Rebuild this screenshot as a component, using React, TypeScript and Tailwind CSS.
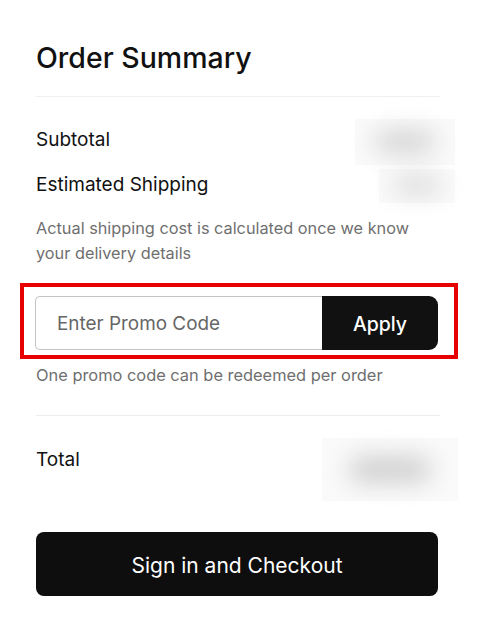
import { useState } from "react";

function Blur({ w, h }: { w: string; h: string }) {
  // blurred price placeholder
  return (
    <div className={`flex items-center justify-center shrink-0 ${w} ${h} bg-[#fafafa]`}>
      <div className="w-3/5 h-2/5 rounded-full bg-[#cdcdcd] blur-md" />
    </div>
  );
}

export default function App() {
  const [code, setCode] = useState("");

  return (
    <div className="w-[478px] h-[617px] bg-white text-[#111] font-['Inter',sans-serif] overflow-hidden">
      <div className="pl-[36px] pr-[40px] pt-[39px]">
        <h2 className="text-[28.5px] leading-[38px] font-medium">Order Summary</h2>
        <div className="mt-[19px] h-px bg-[#efefef] mr-[-2px]" />

        <div className="mt-[30px] h-[25px] flex items-center justify-between">
          <span className="text-[19px] leading-[25px]">Subtotal</span>
          <div className="mr-[-17px] mt-[4px]">
            <Blur w="w-[100px]" h="h-[46px]" />
          </div>
        </div>
        <div className="mt-[20px] h-[25px] flex items-center justify-between">
          <span className="text-[19px] leading-[25px]">Estimated Shipping</span>
          <div className="mr-[-17px] mt-[2px]">
            <Blur w="w-[76px]" h="h-[34px]" />
          </div>
        </div>

        <p className="mt-[19px] text-[16.3px] leading-[25px] text-[#6f6f6f]">
          Actual shipping cost is calculated once we know your delivery details
        </p>

        <div className="mt-[17px] ml-[-16px] mr-[-20px] border-[4px] border-[#e60000] pl-[11px] pr-[16px] pt-[9px] pb-[5px]">
          <div className="flex h-[54px]">
            <input
              value={code}
              onChange={(e) => setCode(e.target.value)}
              placeholder="Enter Promo Code"
              className="flex-1 min-w-0 border border-[#c4c4c4] border-r-0 rounded-l-[5px] pl-[21px] pt-[3px] text-[18.9px] text-[#111] placeholder:text-[#666] outline-none"
            />
            <button className="w-[116px] pt-[3px] bg-[#111] text-white text-[19.5px] font-medium rounded-r-[9px]">Apply</button>
          </div>
        </div>

        <p className="mt-[4px] text-[16.4px] leading-[24px] text-[#6f6f6f]">One promo code can be redeemed per order</p>

        <div className="mt-[28px] h-px bg-[#ececec] mr-[-2px]" />

        <div className="mt-[31px] h-[25px] flex items-center justify-between">
          <span className="text-[19px] leading-[25px]">Total</span>
          <div className="mr-[-20px] mt-[20px]">
            <Blur w="w-[136px]" h="h-[63px]" />
          </div>
        </div>

        <button className="mt-[60px] w-full h-[64px] pt-[3px] rounded-[8px] bg-[#0e0e0e] text-white text-[21px]">
          Sign in and Checkout
        </button>
      </div>
    </div>
  );
}
